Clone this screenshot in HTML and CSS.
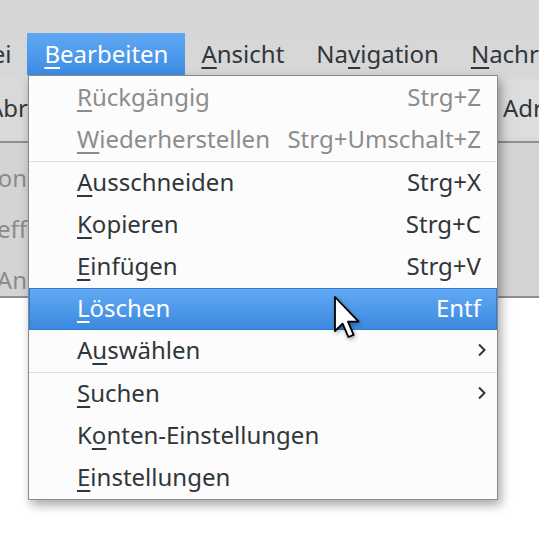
FILE: index.html
```html
<!DOCTYPE html>
<html lang="de">
<head>
<meta charset="UTF-8">
<title>Bearbeiten-Menü</title>
<link rel="stylesheet" href="styles.css">
</head>
<body>
<div class="window">
    <div class="titlebar"></div>
    <div class="menubar">
        <span class="menubar-item first"><u>D</u>atei</span>
        <span class="menubar-item active"><u>B</u>earbeiten</span>
        <span class="menubar-item"><u>A</u>nsicht</span>
        <span class="menubar-item">Na<u>v</u>igation</span>
        <span class="menubar-item"><u>N</u>achrichten</span>
    </div>
    <div class="toolbar">
        <span class="tool-left">Abrufen</span>
        <span class="tool-right">Adressbuch</span>
    </div>
    <div class="fields">
        <div class="field"><span class="label">Von</span></div>
        <div class="field"><span class="label">Betreff</span></div>
        <div class="field"><span class="label">An</span></div>
    </div>
    <div class="content"></div>
</div>

<div class="menu">
    <div class="item disabled"><span><u>R</u>ückgängig</span><span class="key">Strg+Z</span></div>
    <div class="item disabled"><span><u>W</u>iederherstellen</span><span class="key">Strg+Umschalt+Z</span></div>
    <div class="sep"></div>
    <div class="item"><span><u>A</u>usschneiden</span><span class="key">Strg+X</span></div>
    <div class="item"><span><u>K</u>opieren</span><span class="key">Strg+C</span></div>
    <div class="item"><span><u>E</u>infügen</span><span class="key">Strg+V</span></div>
    <div class="item hover"><span><u>L</u>öschen</span><span class="key">Entf</span></div>
    <div class="item"><span>A<u>u</u>swählen</span>
        <svg class="chevron" width="10" height="14" viewBox="0 0 10 14"><polyline points="2,1.5 7.5,7 2,12.5" /></svg>
    </div>
    <div class="sep"></div>
    <div class="item"><span><u>S</u>uchen</span>
        <svg class="chevron" width="10" height="14" viewBox="0 0 10 14"><polyline points="2,1.5 7.5,7 2,12.5" /></svg>
    </div>
    <div class="item"><span>K<u>o</u>nten-Einstellungen</span></div>
    <div class="item"><span><u>E</u>instellungen</span></div>
</div>

<svg class="cursor" width="28" height="44" viewBox="0 0 14 22">
    <path d="M0.5 0.5 L0.5 17.5 L4.3 13.8 L7.2 20.5 L9.8 19.4 L7 12.8 L12.3 12.8 Z" />
</svg>
</body>
</html>
```

FILE: styles.css
```css
body {
    margin: 0;
    width: 539px;
    height: 542px;
    overflow: hidden;
    position: relative;
    font-family: "Noto Sans", "Open Sans", sans-serif;
    font-size: 24px;
    color: #31363b;
    background-color: #fff;
}
u {
    text-decoration-thickness: 2px;
    text-underline-offset: 4px;
}
.window {
    display: flex;
    flex-direction: column;
    height: 100%;
}
.titlebar {
    height: 33px;
    background-color: #d6d6d6;
}
.menubar {
    display: flex;
    height: 42px;
    line-height: 42px;
    background-color: #d7d7d7;
    white-space: nowrap;
}
.menubar-item {
    padding: 0 16px;
}
.menubar-item.first {
    margin-left: -64px;
}
.menubar-item.active {
    background: linear-gradient(to bottom, #60a8f3, #3d8ce5);
    color: #fff;
    padding: 0 17px;
}
.toolbar {
    display: flex;
    justify-content: space-between;
    height: 66px;
    line-height: 66px;
    background-color: #d9d9d9;
    border-bottom: 2px solid #8f8f8f;
    white-space: nowrap;
    overflow: hidden;
}
.tool-left {
    margin-left: -12px;
}
.tool-right {
    width: 36px;
    padding-left: 2px;
    margin: 4px 0;
    line-height: 58px;
    background-color: #dddddd;
    overflow: hidden;
}
.fields {
    height: 155px;
    padding-top: 9px;
    box-sizing: border-box;
    background-color: #d4d4d4;
    border-bottom: 2px solid #8f8f8f;
    color: #8b8b8b;
}
.field {
    height: 51px;
    line-height: 51px;
}
.label {
    display: flex;
    justify-content: flex-end;
    width: 27px;
    white-space: nowrap;
}
.content {
    flex: 1;
    background-color: #fff;
}

.menu {
    position: absolute;
    left: 28px;
    top: 75px;
    width: 470px;
    box-sizing: border-box;
    border: 1px solid #8a8a8a;
    padding-top: 1px;
    background-color: #fcfcfc;
    box-shadow: 3px 5px 10px rgba(0, 0, 0, 0.35);
}
.item {
    display: flex;
    justify-content: space-between;
    align-items: center;
    height: 42px;
    box-sizing: border-box;
    padding: 0 16px 3px 48px;
    white-space: nowrap;
}
.item.disabled {
    color: #8c8c8c;
}
.item.hover {
    background: linear-gradient(to bottom, #62aaf4, #3a88df);
    box-shadow: inset 0 0 0 1px #2f7cd3;
    color: #fff;
}
.sep {
    height: 1px;
    background-color: #e0e0e0;
}
.chevron {
    margin-right: -6px;
}
.chevron polyline {
    fill: none;
    stroke: #31363b;
    stroke-width: 2;
}
.cursor {
    position: absolute;
    left: 334px;
    top: 296px;
    filter: drop-shadow(1px 2px 2px rgba(0, 0, 0, 0.35));
}
.cursor path {
    fill: #fff;
    stroke: #000;
    stroke-width: 0.9;
    stroke-linejoin: round;
}
```
